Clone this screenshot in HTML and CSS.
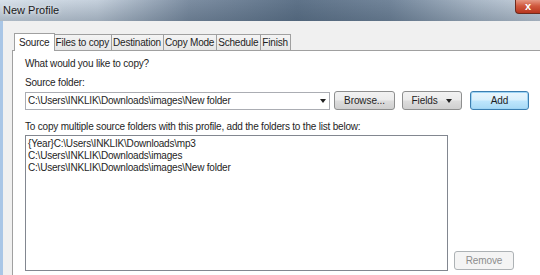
FILE: index.html
```html
<!DOCTYPE html>
<html lang="en">
<head>
    <meta charset="UTF-8">
    <title>New Profile</title>
    <link rel="stylesheet" href="styles.css">
</head>
<body>
    <div class="window">
        <div class="titlebar">
            <span class="title">New Profile</span>
            <div class="close">x</div>
        </div>
        <div class="frame">
            <div class="dialog">
                <div class="tabs">
                    <div class="tab active">Source</div>
                    <div class="tab">Files to copy</div>
                    <div class="tab">Destination</div>
                    <div class="tab">Copy Mode</div>
                    <div class="tab">Schedule</div>
                    <div class="tab">Finish</div>
                </div>
                <div class="panel">
                    <div class="question">What would you like to copy?</div>
                    <div class="label">Source folder:</div>
                    <div class="source-row">
                        <div class="combo">
                            <span>C:\Users\INKLIK\Downloads\images\New folder</span>
                            <span class="arrow"></span>
                        </div>
                        <button class="btn browse">Browse...</button>
                        <button class="btn fields">Fields <span class="arrow"></span></button>
                        <button class="btn add">Add</button>
                    </div>
                    <div class="label hint">To copy multiple source folders with this profile, add the folders to the list below:</div>
                    <div class="list-row">
                        <div class="listbox">
                            <div class="item">{Year}C:\Users\INKLIK\Downloads\mp3</div>
                            <div class="item">C:\Users\INKLIK\Downloads\images</div>
                            <div class="item">C:\Users\INKLIK\Downloads\images\New folder</div>
                        </div>
                        <button class="btn remove">Remove</button>
                    </div>
                </div>
            </div>
        </div>
    </div>
</body>
</html>
```
FILE: styles.css
```css
body {
    margin: 0;
    width: 540px;
    height: 275px;
    overflow: hidden;
    font-family: "Liberation Sans", Arial, sans-serif;
    font-size: 10px;
    letter-spacing: -0.2px;
    color: #1e1e1e;
    background-color: #f0f0f0;
}
.window {
    display: flex;
    flex-direction: column;
    height: 275px;
}
.titlebar {
    height: 21px;
    display: flex;
    align-items: flex-start;
    justify-content: space-between;
    background: linear-gradient(180deg, rgba(255,255,255,0.0) 0%, rgba(40,60,80,0.25) 100%),
                linear-gradient(90deg, #d9e2eb 0%, #c5d0dc 18%, #7d8ea2 35%, #5f7389 55%, #72859a 72%, #a9b7c6 88%, #c9d3de 100%);
}
.title {
    font-size: 11px;
    letter-spacing: 0;
    color: #1a1a1a;
    padding: 4px 0 0 3px;
    text-shadow: 0 0 4px rgba(255,255,255,0.9);
}
.close {
    width: 24px;
    height: 14px;
    margin-top: -1px;
    border: 1px solid #6e2a1c;
    border-top: none;
    border-right: none;
    border-radius: 0 0 0 4px;
    background: linear-gradient(180deg, #e9a390 0%, #d0593e 50%, #b8361e 100%);
    color: #fff;
    font-weight: bold;
    font-size: 11px;
    text-align: center;
    line-height: 14px;
}
.frame {
    flex: 1;
    display: flex;
    border-left: 3px solid #a9c6e6;
    background-color: #f0f0f0;
}
.dialog {
    flex: 1;
    display: flex;
    flex-direction: column;
    padding: 12px 0 0 9px;
}
.tabs {
    display: flex;
    align-items: flex-end;
    height: 17px;
    padding-left: 2px;
}
.tab {
    height: 15px;
    line-height: 15px;
    padding: 0 2px 0 1px;
    border: 1px solid #a0a0a0;
    border-bottom: none;
    margin-left: -1px;
    background: linear-gradient(180deg, #f4f4f4 0%, #e6e6e6 100%);
}
.tab.active {
    height: 17px;
    line-height: 17px;
    padding: 0 4px;
    background: #fff;
    position: relative;
    z-index: 1;
    margin-bottom: -1px;
    margin-left: 0;
}
.panel {
    flex: 1;
    background-color: #fff;
    border-top: 1px solid #a0a0a0;
    border-left: 1px solid #a0a0a0;
    padding: 7px 0 0 12px;
}
.question {
    height: 19px;
}
.label {
    height: 14px;
}
.source-row {
    display: flex;
    align-items: center;
    height: 19px;
    margin-bottom: 11px;
}
.combo {
    width: 301px;
    height: 16px;
    line-height: 16px;
    border: 1px solid #abadb3;
    padding-left: 2px;
    display: flex;
    justify-content: space-between;
    align-items: center;
    margin-right: 4px;
}
.arrow {
    display: inline-block;
    width: 0;
    height: 0;
    border-left: 3px solid transparent;
    border-right: 3px solid transparent;
    border-top: 4px solid #222;
    margin-right: 3px;
}
.btn {
    font-family: "Liberation Sans", Arial, sans-serif;
    font-size: 10px;
    letter-spacing: -0.1px;
    color: #1e1e1e;
    height: 19px;
    width: 61px;
    padding: 0;
    border: 1px solid #8e8f8f;
    border-radius: 3px;
    background: linear-gradient(180deg, #f2f2f2 0%, #ebebeb 48%, #dddddd 52%, #cfcfcf 100%);
}
.browse {
    margin-right: 7px;
}
.fields {
    width: 60px;
    margin-right: 8px;
}
.fields .arrow {
    margin-left: 6px;
    margin-right: 0;
    vertical-align: 1px;
}
.add {
    width: 59px;
    border-color: #3c7fb1;
    box-shadow: inset 0 0 0 1px #9fd5f5;
    background: linear-gradient(180deg, #eaf6fd 0%, #d9f0fc 48%, #bee6fd 52%, #a7d9f5 100%);
}
.list-row {
    display: flex;
    align-items: flex-end;
}
.listbox {
    width: 419px;
    height: 132px;
    border: 1px solid #828790;
    padding: 2px 0 0 2px;
    margin-right: 6px;
}
.item {
    height: 12px;
    line-height: 12px;
}
.remove {
    color: #8d8d8d;
    border-color: #adb2b5;
    background: #f4f4f4;
    width: 60px;
    margin-bottom: 1px;
}
```
